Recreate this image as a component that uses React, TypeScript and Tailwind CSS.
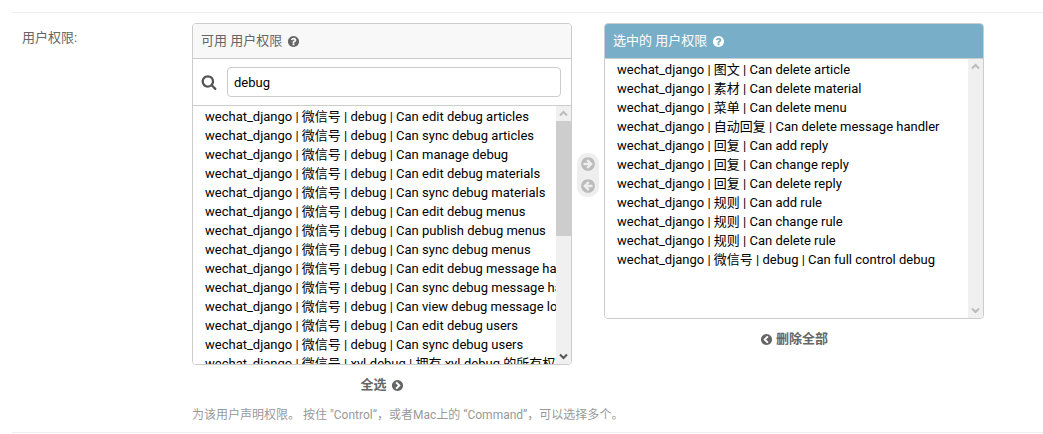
import { useState } from 'react';

const DISC =
  'm251 0q0 209-103 385.500t-279.500 279.500-385.500 103-385.500-103-279.500-279.500-103-385.500 103-385.500 279.500-279.500 385.500-103 385.500 103 279.500 279.500 103 385.500z';

const PATHS = {
  search:
    'M1216 832q0-185-131.500-316.500t-316.500-131.500-316.500 131.500-131.500 316.500 131.500 316.500 316.500 131.500 316.500-131.500 131.500-316.500zm512 832q0 52-38 90t-90 38q-54 0-90-38l-343-342q-179 124-399 124-143 0-273.500-55.500t-225-150-150-225-55.500-273.500 55.500-273.500 150-225 225-150 273.500-55.500 273.500 55.500 225 150 150 225 55.500 273.500q0 220-124 399l343 343q37 37 37 90z',
  help: 'M1024 1376v-192q0-14-9-23t-23-9h-192q-14 0-23 9t-9 23v192q0 14 9 23t23 9h192q14 0 23-9t9-23zm256-672q0-88-55.500-163t-138.500-116-170-41q-243 0-371 213-15 24 8 42l132 100q7 6 19 6 16 0 25-12 53-68 86-92 34-24 86-24 48 0 85.500 26t37.500 59q0 38-20 61t-68 45q-63 28-115.500 86.500t-52.500 125.500v36q0 14 9 23t23 9h192q14 0 23-9t9-23q0-19 21.500-49.500t54.500-49.500q32-18 49-28.500t46-35 44.500-48 28-60.500 12.500-81zm384 192q0 209-103 385.500t-279.500 279.500-385.500 103-385.500-103-279.500-279.500-103-385.500 103-385.500 279.500-279.500 385.500-103 385.500 103 279.500 279.500 103 385.500z',
  arrow:
    'M1413 896q0-27-18-45l-91-91-362-362q-18-18-45-18t-45 18l-91 91q-18 18-18 45t18 45l189 189h-502q-26 0-45 19t-19 45v128q0 26 19 45t45 19h502l-189 189q-19 19-19 45t19 45l91 91q18 18 45 18t45-18l362-362 91-91q18-18 18-45z' +
    DISC,
  chevron:
    'M845 1395l454-454q19-19 19-45t-19-45l-454-454q-19-19-45-19t-45 19l-102 102q-19 19-19 45t19 45l307 307-307 307q-19 19-19 45t19 45l102 102q19 19 45 19t45-19zm819-499q0 209-103 385.500t-279.500 279.500-385.500 103-385.500-103-279.500-279.500-103-385.500 103-385.500 279.500-279.500 385.500-103 385.500 103 279.500 279.500 103 385.500z',
};

function Icon({ name, className }: { name: keyof typeof PATHS; className: string }) {
  return (
    <svg viewBox="0 0 1792 1792" fill="currentColor" fillRule="evenodd" aria-hidden="true" className={`shrink-0 ${className}`}>
      <path d={PATHS[name]} />
    </svg>
  );
}

const AVAILABLE = [
  'debug | Can edit debug articles',
  'debug | Can sync debug articles',
  'debug | Can manage debug',
  'debug | Can edit debug materials',
  'debug | Can sync debug materials',
  'debug | Can edit debug menus',
  'debug | Can publish debug menus',
  'debug | Can sync debug menus',
  'debug | Can edit debug message handlers',
  'debug | Can sync debug message handlers',
  'debug | Can view debug message logs',
  'debug | Can edit debug users',
  'debug | Can sync debug users',
  'xyl-debug | 拥有 xyl-debug 的所有权限',
].map((name) => `wechat_django | 微信号 | ${name}`);

const CHOSEN = [
  '图文 | Can delete article',
  '素材 | Can delete material',
  '菜单 | Can delete menu',
  '自动回复 | Can delete message handler',
  '回复 | Can add reply',
  '回复 | Can change reply',
  '回复 | Can delete reply',
  '规则 | Can add rule',
  '规则 | Can change rule',
  '规则 | Can delete rule',
  '微信号 | debug | Can full control debug',
].map((name) => `wechat_django | ${name}`);

function Caret({ up, className }: { up?: boolean; className: string }) {
  return (
    <svg viewBox="0 0 15 15" fill="none" stroke="currentColor" strokeWidth="2" aria-hidden="true" className={`size-[15px] shrink-0 ${className}`}>
      <path d={up ? 'M4 9.500L7.500 6L11 9.500' : 'M4 5.500L7.500 9L11 5.500'} />
    </svg>
  );
}

function PermissionList({ id, items, scrollable, className }: { id: string; items: string[]; scrollable?: boolean; className: string }) {
  return (
    <div className={`flex ${className}`}>
      <select
        id={id}
        multiple
        className="h-full min-w-0 flex-1 overflow-x-hidden overflow-y-auto bg-white text-[13px] text-black outline-none [scrollbar-width:none]"
      >
        {items.map((item) => (
          <option key={item} className="h-[19px] min-h-[19px] px-3 pt-0 pb-[2px] leading-[17px] whitespace-nowrap">
            {item}
          </option>
        ))}
      </select>
      <div className="flex w-[15px] shrink-0 flex-col justify-between bg-[#f0f0f0]">
        <Caret up className="text-[#bcbcbc]" />
        {scrollable && <div className="mb-auto h-[115px] bg-[#cdcdcd]" />}
        <Caret className={scrollable ? 'text-[#555]' : 'text-[#bcbcbc]'} />
      </div>
    </div>
  );
}

export default function App() {
  const [filter, setFilter] = useState('debug');
  return (
    <main className="bg-white pt-3 pl-3 font-['Roboto','Noto_Sans_CJK_SC',sans-serif] text-[13px] text-[#666]">
      <div className="flex border-y border-[#eee] pt-[10px] pb-[7px] pl-[10px]">
        <label htmlFor="chosen" className="w-[170px] shrink-0 pt-[5px] leading-5">
          用户权限:
        </label>
        <div className="min-w-0 flex-1">
          <div className="flex items-start">
            <section className="max-w-[380px] min-w-0 flex-1">
              <div className="overflow-hidden rounded-[4px] border border-[#ccc]">
                <h2 className="flex h-[35px] items-center gap-[5px] border-b border-[#ccc] bg-[#f8f8f8] px-2">
                  <label htmlFor="available">可用 用户权限</label>
                  <Icon name="help" className="size-[13px]" />
                </h2>
                <div className="flex h-[47px] items-center gap-[10px] border-b border-[#ccc] pr-[10px] pl-2">
                  <label htmlFor="filter" aria-label="过滤">
                    <Icon name="search" className="size-4 text-[#555]" />
                  </label>
                  <input
                    id="filter"
                    type="text"
                    value={filter}
                    onChange={(e) => setFilter(e.target.value)}
                    className="h-[30px] min-w-0 flex-1 rounded-[4px] border border-[#ccc] px-[6px] text-black outline-none"
                  />
                </div>
                <PermissionList id="available" items={AVAILABLE} scrollable className="h-[258px]" />
              </div>
              <button type="button" className="mx-auto mt-[10px] flex items-center gap-1 leading-5 font-bold">
                全选
                <Icon name="chevron" className="size-[13px]" />
              </button>
            </section>
            <div className="mx-[5px] mt-[130px] flex w-[22px] shrink-0 flex-col items-center gap-[6px] rounded-[10px] bg-[#eee] py-[3px] text-[#bbb]">
              <button type="button" aria-label="选择">
                <Icon name="arrow" className="size-4" />
              </button>
              <button type="button" aria-label="删除">
                <Icon name="arrow" className="size-4 rotate-180" />
              </button>
            </div>
            <section className="max-w-[380px] min-w-0 flex-1">
              <div className="overflow-hidden rounded-[4px] border border-[#ccc]">
                <h2 className="flex h-[35px] items-center gap-[5px] border-b border-[#ccc] bg-[#79aec8] px-2 text-white">
                  <label htmlFor="chosen">选中的 用户权限</label>
                  <Icon name="help" className="size-[13px]" />
                </h2>
                <PermissionList id="chosen" items={CHOSEN} className="h-[259px]" />
              </div>
              <button type="button" className="mx-auto mt-[10px] flex items-center gap-[3px] leading-5 font-bold">
                <Icon name="chevron" className="size-[13px] rotate-180" />
                删除全部
              </button>
            </section>
          </div>
          <p className="mt-[10px] text-xs leading-5 text-[#999]">
            为该用户声明权限。 按住 "Control“，或者Mac上的 “Command”，可以选择多个。
          </p>
        </div>
      </div>
    </main>
  );
}
